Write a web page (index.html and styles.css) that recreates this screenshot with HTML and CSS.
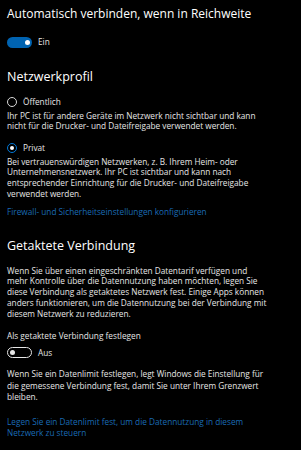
FILE: index.html
```html
<!DOCTYPE html>
<html lang="de">
<head>
<meta charset="utf-8">
<link rel="stylesheet" href="styles.css">
</head>
<body>
<main class="page">
  <div class="title">Automatisch verbinden, wenn in Reichweite</div>
  <div class="toggle-row toggle-row-1">
    <span class="toggle on"><span class="knob"></span></span>
    <span class="toggle-label">Ein</span>
  </div>

  <h2 class="heading heading-1">Netzwerkprofil</h2>
  <div class="radio-row radio-row-1">
    <span class="radio"></span>
    <span class="radio-label">Öffentlich</span>
  </div>
  <p class="desc desc-1">Ihr PC ist für andere Geräte im Netzwerk nicht sichtbar und kann<br>nicht für die Drucker- und Dateifreigabe verwendet werden.</p>
  <div class="radio-row radio-row-2">
    <span class="radio checked"></span>
    <span class="radio-label">Privat</span>
  </div>
  <p class="desc desc-2">Bei vertrauenswürdigen Netzwerken, z. B. Ihrem Heim- oder<br>Unternehmensnetzwerk. Ihr PC ist sichtbar und kann nach<br>entsprechender Einrichtung für die Drucker- und Dateifreigabe<br>verwendet werden.</p>
  <a class="link link-1" href="#">Firewall- und Sicherheitseinstellungen konfigurieren</a>

  <h2 class="heading heading-2">Getaktete Verbindung</h2>
  <p class="desc desc-3">Wenn Sie über einen eingeschränkten Datentarif verfügen und<br>mehr Kontrolle über die Datennutzung haben möchten, legen Sie<br>diese Verbindung als getaktetes Netzwerk fest. Einige Apps können<br>anders funktionieren, um die Datennutzung bei der Verbindung mit<br>diesem Netzwerk zu reduzieren.</p>
  <div class="label">Als getaktete Verbindung festlegen</div>
  <div class="toggle-row toggle-row-2">
    <span class="toggle off"><span class="knob"></span></span>
    <span class="toggle-label">Aus</span>
  </div>
  <p class="desc desc-4">Wenn Sie ein Datenlimit festlegen, legt Windows die Einstellung für<br>die gemessene Verbindung fest, damit Sie unter Ihrem Grenzwert<br>bleiben.</p>
  <a class="link link-2" href="#">Legen Sie ein Datenlimit fest, um die Datennutzung in diesem<br>Netzwerk zu steuern</a>
</main>
</body>
</html>
```
FILE: styles.css
```css
html, body {
  margin: 0;
  padding: 0;
  background: #000;
}
.page {
  width: 301px;
  height: 450px;
  box-sizing: border-box;
  padding: 6px 0 0 7px;
  font-family: "Open Sans", "Noto Sans", sans-serif;
  color: #fff;
  overflow: hidden;
}
.title {
  font-size: 12px;
  line-height: 16px;
  height: 16px;
}
.toggle-row {
  display: flex;
  align-items: center;
  gap: 6px;
  height: 12px;
}
.toggle-row-1 { margin-top: 14px; }
.toggle-row-2 { margin-top: 4.6px; }
.toggle {
  box-sizing: border-box;
  width: 25px;
  height: 11px;
  border-radius: 6px;
  display: flex;
  align-items: center;
  padding: 0 2px;
}
.toggle.on {
  background: #0063b1;
  justify-content: flex-end;
}
.toggle.off {
  border: 1.3px solid #e6e6e6;
  justify-content: flex-start;
}
.knob {
  width: 5px;
  height: 5px;
  border-radius: 50%;
  background: #fff;
}
.toggle.off .knob {
  background: #e6e6e6;
}
.toggle-label {
  font-size: 8.25px;
  line-height: 12px;
  color: #e6e6e6;
}
.heading {
  margin: 0;
  font-weight: normal;
  font-size: 12.5px;
  line-height: 18px;
  height: 18px;
}
.heading-1 { margin-top: 20px; }
.heading-2 { margin-top: 19.6px; }
.radio-row {
  display: flex;
  align-items: center;
  gap: 6px;
  height: 12px;
}
.radio-row-1 { margin-top: 10px; }
.radio-row-2 { margin-top: 9.9px; }
.radio {
  box-sizing: border-box;
  width: 10px;
  height: 10px;
  border-radius: 50%;
  border: 1px solid #d9d9d9;
  display: flex;
  align-items: center;
  justify-content: center;
}
.radio.checked {
  border: 1.6px solid #0078d7;
}
.radio.checked::after {
  content: "";
  width: 4px;
  height: 4px;
  border-radius: 50%;
  background: #fff;
}
.radio-label {
  font-size: 8.25px;
  line-height: 12px;
  color: #e6e6e6;
}
.desc {
  margin: 0;
  font-size: 8.25px;
  line-height: 10.75px;
  color: #e6e6e6;
  white-space: nowrap;
}
.desc-1 { margin-top: 2.6px; }
.desc-2 { margin-top: 2.6px; }
.desc-3 { margin-top: 10.6px; }
.desc-4 { margin-top: 9.6px; line-height: 11.3px; }
.label {
  margin-top: 12.2px;
  font-size: 8.25px;
  line-height: 10.75px;
  color: #e6e6e6;
}
.link {
  display: block;
  font-size: 8.25px;
  line-height: 10.75px;
  color: #1a6bb5;
  text-decoration: none;
  white-space: nowrap;
}
.link-1 { margin-top: 7px; }
.link-2 { margin-top: 15px; }
```
